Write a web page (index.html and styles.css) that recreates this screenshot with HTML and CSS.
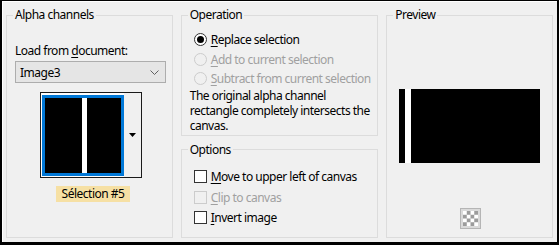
FILE: index.html
```html
<!DOCTYPE html>
<html lang="en">
<head>
    <meta charset="UTF-8">
    <title>Load Selection From Alpha Channel</title>
    <link rel="stylesheet" href="styles.css">
</head>
<body>
    <div class="dialog">
        <fieldset class="group alpha">
            <legend>Alpha channels</legend>
            <div class="field-label">Load from <u>d</u>ocument:</div>
            <div class="combo">
                <span>Image3</span>
                <svg class="chevron" width="9" height="5" viewBox="0 0 9 5"><path d="M0.5 0.5 L4.5 4.5 L8.5 0.5" fill="none" stroke="#606060" stroke-width="1"/></svg>
            </div>
            <div class="thumbs">
                <div class="thumb"><div class="stripe"></div></div>
                <div class="thumb-drop">
                    <svg width="7" height="4" viewBox="0 0 7 4"><path d="M0 0 H7 L3.5 4 Z" fill="#000"/></svg>
                </div>
            </div>
            <div class="thumb-name">Sélection #5</div>
        </fieldset>

        <div class="middle">
            <fieldset class="group operation">
                <legend>Operation</legend>
                <div class="choice"><span class="radio checked"></span><span><u>R</u>eplace selection</span></div>
                <div class="choice disabled"><span class="radio"></span><span><u>A</u>dd to current selection</span></div>
                <div class="choice disabled"><span class="radio"></span><span><u>S</u>ubtract from current selection</span></div>
                <p class="note">The original alpha channel rectangle completely intersects the canvas.</p>
            </fieldset>
            <fieldset class="group options">
                <legend>Options</legend>
                <div class="choice check"><span class="box"></span><span><u>M</u>ove to upper left of canvas</span></div>
                <div class="choice check disabled"><span class="box"></span><span><u>C</u>lip to canvas</span></div>
                <div class="choice check"><span class="box"></span><span><u>I</u>nvert image</span></div>
            </fieldset>
        </div>

        <fieldset class="group preview">
            <legend>Preview</legend>
            <div class="preview-img">
                <div class="p-bar"></div>
                <div class="p-gap"></div>
                <div class="p-rest"></div>
            </div>
            <div class="checker-btn"><div class="checker"></div></div>
        </fieldset>
    </div>
</body>
</html>
```

FILE: styles.css
```css
body {
    margin: 0;
    font-family: "Noto Sans", "Open Sans", sans-serif;
    font-size: 12px;
    letter-spacing: -0.5px;
    color: #000;
}
.dialog {
    width: 559px;
    height: 245px;
    box-sizing: border-box;
    border-style: solid;
    border-color: #000;
    border-width: 1px 2px 3px 2px;
    box-shadow: inset 1px 1px 0 #fff;
    background: #f0f0f0;
    padding: 6px 4px 4px 4px;
    display: flex;
    gap: 8px;
}
u {
    text-decoration: underline;
    text-underline-offset: 2px;
}
.group {
    margin: 0;
    padding: 0 6px;
    min-width: 0;
    border: 1px solid #dcdcdc;
    box-sizing: border-box;
}
.group legend {
    padding: 0 2px;
    line-height: 16px;
}
.alpha {
    width: 167px;
}
.field-label {
    margin: 20px 0 0 2px;
    line-height: 16px;
}
.combo {
    margin: 2px 0 0 2px;
    width: 151px;
    height: 22px;
    box-sizing: border-box;
    border: 1px solid #adadad;
    background: #e5e5e5;
    display: flex;
    align-items: center;
    justify-content: space-between;
    padding: 0 6px 0 4px;
}
.thumbs {
    margin: 9px 0 0 27px;
    width: 102px;
    height: 86px;
    box-sizing: border-box;
    border: 1px solid #1a1a1a;
    display: flex;
    background: #fff;
    padding: 2px 0 0 1px;
}
.thumb {
    width: 82px;
    height: 81px;
    box-sizing: border-box;
    border: 3px solid #0078d7;
    background: #000;
    display: flex;
    justify-content: center;
}
.stripe {
    width: 5px;
    margin-left: 2px;
    background: #fff;
}
.thumb-drop {
    flex: 1;
    margin-top: -2px;
    background: #f0f0f0;
    display: flex;
    align-items: center;
    justify-content: center;
    padding-right: 1px;
}
.thumb-name {
    margin: 8px 0 0 43px;
    width: 74px;
    line-height: 16px;
    background: #f6e0a4;
    text-align: center;
}
.middle {
    width: 198px;
    display: flex;
    flex-direction: column;
    gap: 6px;
}
.operation {
    padding-bottom: 2px;
}
.choice {
    height: 19.5px;
    display: flex;
    align-items: center;
    gap: 4px;
    margin-left: 6px;
    white-space: nowrap;
}
.operation .choice:first-of-type {
    margin-top: 7px;
}
.choice.disabled {
    color: #a0a0a0;
}
.radio {
    width: 13px;
    height: 13px;
    box-sizing: border-box;
    border-radius: 50%;
    border: 1px solid #333;
    background: #fff;
    position: relative;
}
.radio.checked::after {
    content: "";
    position: absolute;
    left: 2px;
    top: 2px;
    width: 7px;
    height: 7px;
    border-radius: 50%;
    background: #000;
}
.disabled .radio,
.disabled .box {
    border-color: #ccc;
    background: #f0f0f0;
}
.note {
    margin: -1px 0 0 2px;
    line-height: 15px;
}
.options {
    flex: 1;
}
.check {
    height: 20.5px;
}
.options .check:first-of-type {
    margin-top: 9px;
}
.box {
    width: 13px;
    height: 13px;
    box-sizing: border-box;
    border: 1px solid #333;
    background: #fff;
}
.preview {
    width: 167px;
    display: flex;
    flex-direction: column;
    align-items: center;
}
.preview-img {
    margin-top: 66px;
    width: 141px;
    height: 74px;
    display: flex;
}
.p-bar {
    width: 6px;
    background: #000;
}
.p-gap {
    width: 6px;
    background: #fff;
}
.p-rest {
    flex: 1;
    background: #000;
}
.checker-btn {
    margin-top: 45px;
    margin-left: 1px;
    width: 21px;
    height: 21px;
    box-sizing: border-box;
    border: 1px solid #b5b5b5;
    padding: 2px;
    background: #dadada;
}
.checker {
    width: 15px;
    height: 15px;
    background: repeating-conic-gradient(#9c9c9c 0% 25%, #fff 0% 50%) 0 0 / 7.5px 7.5px;
}
```
